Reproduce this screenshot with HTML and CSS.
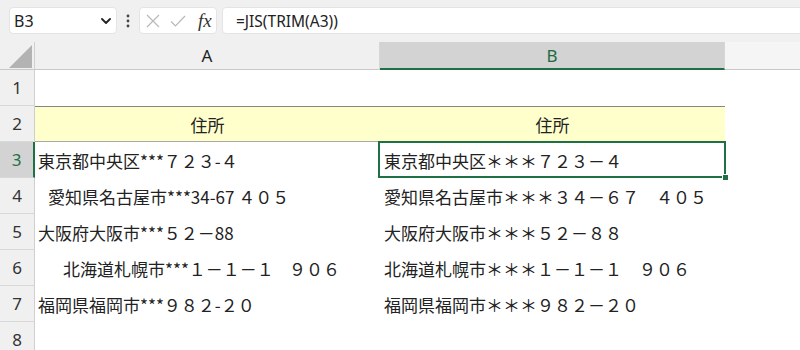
FILE: index.html
```html
<!DOCTYPE html>
<html lang="ja">
<head>
<meta charset="utf-8">
<title>Excel</title>
<link rel="stylesheet" href="styles.css">
</head>
<body>
<div class="app">
  <div class="toolbar">
    <div class="namebox">
      <span class="name">B3</span>
      <svg class="chev" width="10" height="6" viewBox="0 0 10 6"><path d="M1 1 L5 5 L9 1" fill="none" stroke="#222" stroke-width="1.8" stroke-linecap="round" stroke-linejoin="round"/></svg>
    </div>
    <svg class="dots" width="4" height="14" viewBox="0 0 4 14"><circle cx="2" cy="2" r="1.4" fill="#444"/><circle cx="2" cy="7" r="1.4" fill="#444"/><circle cx="2" cy="12" r="1.4" fill="#444"/></svg>
    <div class="fbtns">
      <svg class="xicon" width="14" height="14" viewBox="0 0 14 14"><path d="M1 1 L13 13 M13 1 L1 13" stroke="#b8b8b8" stroke-width="1.2" fill="none"/></svg>
      <svg class="check" width="16" height="12" viewBox="0 0 16 12"><path d="M1 6.5 L5.5 11 L15 1" stroke="#b8b8b8" stroke-width="1.2" fill="none"/></svg>
      <span class="fx">fx</span>
    </div>
    <div class="formula">=JIS(TRIM(A3))</div>
  </div>
  <div class="sheet">
    <div class="corner"><svg width="35" height="28" viewBox="0 0 35 28"><polygon points="32,3 32,26 9,26" fill="#b3b3b3"/></svg></div>
    <div class="ch">A</div>
    <div class="ch ch-sel">B</div>
    <div class="ch ch-rest"></div>

    <div class="rh">1</div>
    <div class="cell"></div>
    <div class="cell"></div>
    <div class="cell"></div>

    <div class="rh">2</div>
    <div class="cell head">住所</div>
    <div class="cell head">住所</div>
    <div class="cell"></div>

    <div class="rh rh-sel">3</div>
    <div class="cell">東京都中央区***７２３-４</div>
    <div class="cell cell-b active">東京都中央区＊＊＊７２３－４</div>
    <div class="cell"></div>

    <div class="rh">4</div>
    <div class="cell"><span class="lead">  </span>愛知県名古屋市***34-67 ４０５</div>
    <div class="cell cell-b">愛知県名古屋市＊＊＊３４－６７　４０５</div>
    <div class="cell"></div>

    <div class="rh">5</div>
    <div class="cell">大阪府大阪市***５２－88</div>
    <div class="cell cell-b">大阪府大阪市＊＊＊５２－８８</div>
    <div class="cell"></div>

    <div class="rh">6</div>
    <div class="cell"><span class="lead">     </span>北海道札幌市***１－１－１<span class="lead">   </span>９０６</div>
    <div class="cell cell-b">北海道札幌市＊＊＊１－１－１　９０６</div>
    <div class="cell"></div>

    <div class="rh">7</div>
    <div class="cell">福岡県福岡市***９８２-２０</div>
    <div class="cell cell-b">福岡県福岡市＊＊＊９８２－２０</div>
    <div class="cell"></div>

    <div class="rh">8</div>
    <div class="cell"></div>
    <div class="cell"></div>
    <div class="cell"></div>
  </div>
</div>
</body>
</html>
```

FILE: styles.css
```css
html, body {
  margin: 0;
  padding: 0;
  background: #ffffff;
  overflow: hidden;
}
.app {
  width: 800px;
  height: 350px;
  overflow: hidden;
}
.toolbar {
  height: 42px;
  box-sizing: border-box;
  padding: 7px 0 0 9px;
  background: #f0f0f0;
  display: flex;
  align-items: flex-start;
}
.namebox {
  width: 108px;
  height: 27px;
  box-sizing: border-box;
  background: #fff;
  border-radius: 4px;
  border: 1px solid #e4e4e4;
  display: flex;
  align-items: center;
  justify-content: space-between;
  padding: 0 5px 0 4px;
  font-family: "Noto Sans", sans-serif;
  font-size: 16px;
  color: #222;
}
.chev {
  display: block;
}
.dots {
  display: block;
  margin: 7px 0 0 9px;
}
.fbtns {
  margin-left: 9px;
  width: 78px;
  height: 27px;
  box-sizing: border-box;
  background: #fff;
  border: 1px solid #e4e4e4;
  border-radius: 4px;
  display: flex;
  align-items: center;
  padding-left: 6px;
}
.xicon { display: block; }
.check { display: block; margin-left: 10px; }
.fx {
  margin-left: 12px;
  font-family: "Liberation Serif", serif;
  font-style: italic;
  font-size: 19px;
  color: #333;
  line-height: 1;
}
.formula {
  margin-left: 5px;
  flex: 1;
  height: 27px;
  margin-right: -10px;
  box-sizing: border-box;
  background: #fff;
  border: 1px solid #e4e4e4;
  border-radius: 4px;
  padding-left: 13px;
  display: flex;
  align-items: center;
  font-family: "Noto Sans", sans-serif;
  font-size: 15.5px;
  color: #222;
}
.sheet {
  display: grid;
  grid-template-columns: 35px 345px 345px 1fr;
  grid-template-rows: 28px repeat(8, 36px);
}
.corner {
  background: #f0f0f0;
  border-right: 1px solid #d0d0d0;
  border-bottom: 1px solid #c8c8c8;
  box-sizing: border-box;
}
.corner svg { display: block; }
.ch {
  background: #f0f0f0;
  border-right: 1px solid #d6d6d6;
  border-bottom: 1px solid #c8c8c8;
  box-sizing: border-box;
  display: flex;
  align-items: center;
  justify-content: center;
  font-family: "Noto Sans", sans-serif;
  font-size: 17px;
  color: #222;
}
.ch-sel {
  background: #d3d3d3;
  color: #1e6b41;
  border-bottom: 2px solid #1e7145;
}
.ch-rest {
  background: #f5f5f5;
  border-right: none;
}
.rh {
  background: #f0f0f0;
  border-right: 1px solid #cfcfcf;
  border-bottom: 1px solid #d8d8d8;
  box-sizing: border-box;
  display: flex;
  align-items: center;
  justify-content: center;
  font-family: "Noto Sans", sans-serif;
  font-size: 17px;
  color: #333;
}
.rh-sel {
  background: #d3d3d3;
  color: #1e7145;
  border-right: 2px solid #1e7145;
}
.cell {
  box-sizing: border-box;
  display: flex;
  align-items: center;
  padding-left: 3px;
  white-space: pre;
  font-family: "Noto Sans CJK JP", sans-serif;
  font-size: 17px;
  color: #222;
  overflow: hidden;
}
.cell-b {
  padding-left: 4px;
}
.head {
  background: #ffffcc;
  border-top: 1px solid #858585;
  border-bottom: 1px solid #a8a8a8;
  justify-content: center;
  padding-left: 0;
}
.lead {
  letter-spacing: 1.2px;
}
.active {
  position: relative;
  overflow: visible;
}
.active::before {
  content: "";
  position: absolute;
  left: -2px;
  top: -1px;
  right: -1px;
  bottom: 0;
  border: 2px solid #1e7145;
}
.active::after {
  content: "";
  position: absolute;
  right: -4px;
  bottom: -3px;
  width: 5px;
  height: 5px;
  background: #1e7145;
  border: 1px solid #fff;
}
```
